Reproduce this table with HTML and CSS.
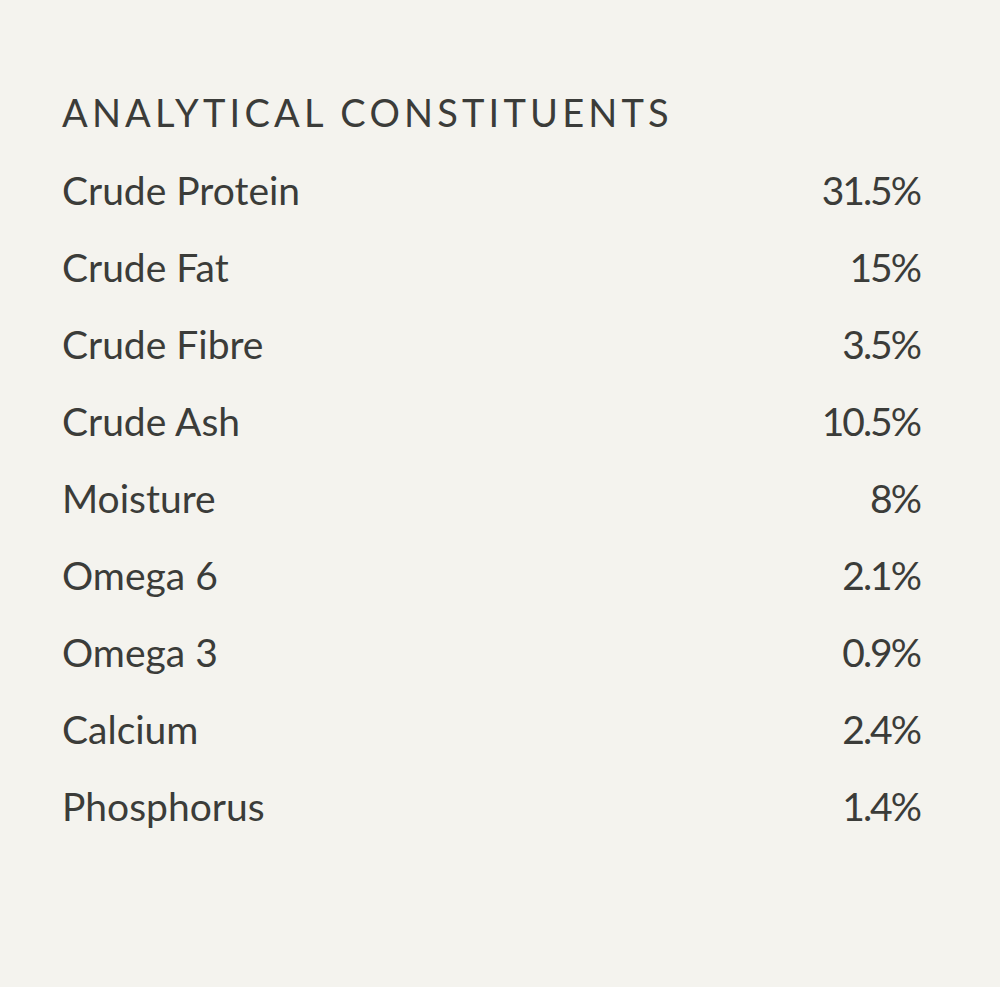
FILE: index.html
```html
<!DOCTYPE html>
<html lang="en">
<head>
<meta charset="utf-8">
<link rel="stylesheet" href="styles.css">
<title>Analytical Constituents</title>
</head>
<body>
<section class="panel">
  <h2 class="title">ANALYTICAL CONSTITUENTS</h2>
  <ul class="list">
    <li class="row"><span>Crude Protein</span><span class="val">31.5%</span></li>
    <li class="row"><span>Crude Fat</span><span class="val">15%</span></li>
    <li class="row"><span>Crude Fibre</span><span class="val">3.5%</span></li>
    <li class="row"><span>Crude Ash</span><span class="val">10.5%</span></li>
    <li class="row"><span>Moisture</span><span class="val">8%</span></li>
    <li class="row"><span>Omega 6</span><span class="val">2.1%</span></li>
    <li class="row"><span>Omega 3</span><span class="val">0.9%</span></li>
    <li class="row"><span>Calcium</span><span class="val">2.4%</span></li>
    <li class="row"><span>Phosphorus</span><span class="val">1.4%</span></li>
  </ul>
</section>
</body>
</html>
```

FILE: styles.css
```css
html, body {
  margin: 0;
  padding: 0;
  background: #f4f3ee;
}
body {
  font-family: Lato, "Open Sans", sans-serif;
  color: #3b3c39;
  width: 1000px;
  height: 987px;
}
.panel {
  padding: 88px 78px 0 62px;
}
.title {
  margin: 0 0 16px 0;
  font-size: 38px;
  font-weight: 400;
  letter-spacing: 0.11em;
  line-height: 48px;
}
.list {
  list-style: none;
  margin: 0;
  padding: 0;
}
.row {
  display: flex;
  justify-content: space-between;
  font-size: 39px;
  line-height: 77px;
}
.val {
  letter-spacing: -2px;
  margin-right: 2px;
}
```
